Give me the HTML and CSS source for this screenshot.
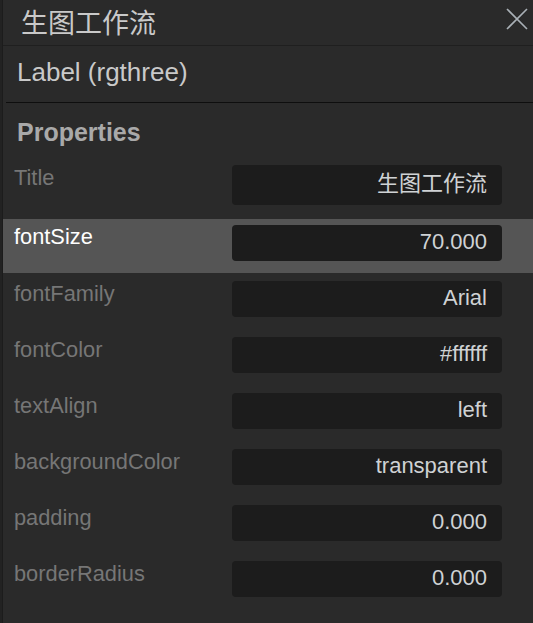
FILE: index.html
```html
<!DOCTYPE html>
<html lang="zh">
<head>
<meta charset="utf-8">
<title>Properties</title>
<link rel="stylesheet" href="styles.css">
</head>
<body>
<div class="panel">
  <header class="head">
    <span class="head-title">生图工作流</span>
    <button class="close" aria-label="close">
      <svg width="22" height="22" viewBox="0 0 22 22"><path d="M1 1L21 21M21 1L1 21" stroke="#a9b0b6" stroke-width="1.6" fill="none"/></svg>
    </button>
  </header>
  <div class="node-type">Label (rgthree)</div>
  <div class="rule"></div>
  <h2 class="section">Properties</h2>
  <div class="props">
    <div class="row"><span class="label">Title</span><div class="value tall">生图工作流</div></div>
    <div class="row active"><span class="label">fontSize</span><div class="value">70.000</div></div>
    <div class="row"><span class="label">fontFamily</span><div class="value">Arial</div></div>
    <div class="row"><span class="label">fontColor</span><div class="value">#ffffff</div></div>
    <div class="row"><span class="label">textAlign</span><div class="value">left</div></div>
    <div class="row"><span class="label">backgroundColor</span><div class="value">transparent</div></div>
    <div class="row"><span class="label">padding</span><div class="value">0.000</div></div>
    <div class="row"><span class="label">borderRadius</span><div class="value">0.000</div></div>
  </div>
</div>
</body>
</html>
```

FILE: styles.css
```css
html, body {
  margin: 0;
  padding: 0;
  height: 100%;
}
body {
  background: #222222;
  font-family: "Liberation Sans", Arial, "Noto Sans CJK SC", sans-serif;
  overflow: hidden;
}
.panel {
  margin-left: 2px;
  border-left: 1px solid #1c1c1c;
  background: #2a2a2a;
  min-height: 100%;
}
.head {
  height: 45px;
  border-bottom: 1px solid #1f1f1f;
  display: flex;
  align-items: flex-start;
  justify-content: space-between;
}
.head-title {
  font-family: "Noto Sans CJK SC", sans-serif;
  font-size: 27px;
  line-height: 38px;
  padding-top: 3px;
  padding-left: 18px;
  color: #c9c9c9;
}
.close {
  background: none;
  border: 0;
  padding: 0;
  margin: 8px 5px 0 0;
  width: 22px;
  height: 22px;
  display: block;
}
.close svg { display: block; }
.node-type {
  font-size: 26px;
  line-height: 30px;
  color: #c9c9c9;
  padding: 11px 0 15px 14px;
}
.rule {
  height: 1px;
  background: #0e0e0e;
  margin-left: 3px;
}
.section {
  margin: 0 0 12px;
  padding: 14px 0 0 14px;
  font-size: 25px;
  line-height: 30px;
  font-weight: bold;
  color: #a9a9a9;
}
.props {
  display: flex;
  flex-direction: column;
  gap: 2px;
}
.row {
  display: grid;
  grid-template-columns: 218px 270px;
  align-items: start;
  padding: 6px 0 12px 11px;
}
.row.active {
  background: #555555;
}
.label {
  font-size: 21.8px;
  line-height: 24px;
  padding-top: 1px;
  color: #767676;
}
.row.active .label {
  color: #ffffff;
  padding-top: 0;
}
.value {
  height: 36px;
  box-sizing: border-box;
  background: #1c1c1c;
  border-radius: 4px;
  padding: 5px 15px 0 0;
  text-align: right;
  font-size: 22px;
  line-height: 24px;
  color: #cfd2d4;
}
.value.tall {
  height: 40px;
  padding-top: 4px;
  line-height: 30px;
}
```
